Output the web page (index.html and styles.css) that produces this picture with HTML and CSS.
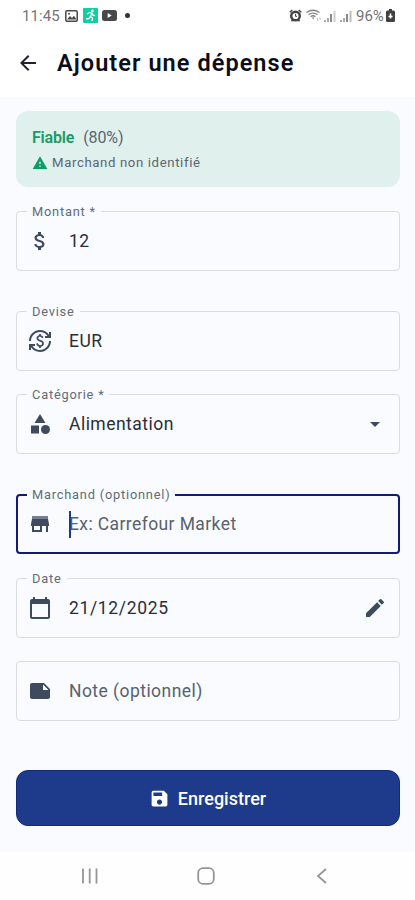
FILE: index.html
```html
<!DOCTYPE html>
<html lang="fr">
<head>
<meta charset="utf-8">
<meta name="viewport" content="width=device-width, initial-scale=1">
<title>Ajouter une dépense</title>
<link rel="stylesheet" href="styles.css">
</head>
<body>
<div class="statusbar">
  <span class="clock">11:45</span>
  <svg class="st-img" width="13" height="12" viewBox="0 0 13 12"><rect x=".8" y=".8" width="11.4" height="10.4" rx="1.2" fill="none" stroke="#484848" stroke-width="1.5"/><path d="M2 9.500 5 6l2 2 2-2.300 2.500 3.800z" fill="#484848"/><circle cx="4" cy="3.800" r="1" fill="#484848"/></svg>
  <svg class="st-run" width="15" height="15" viewBox="0 0 15 15"><rect width="15" height="15" rx="1" fill="#12cda0"/><circle cx="9.300" cy="3" r="1.400" fill="#fff"/><path d="M4 6l3-1.500 2 .8-1.500 3.200 2 1.500-.5 3M7.300 8.500 6 10.500 3.200 11M9 5.500l1 1.700 2 .3" fill="none" stroke="#fff" stroke-width="1.300"/></svg>
  <svg class="st-tube" width="15" height="11" viewBox="0 0 15 11"><rect width="15" height="11" rx="2.500" fill="#484848"/><path d="M5.700 3v5l4-2.500z" fill="#fff"/></svg>
  <span class="dot"></span>
  <span class="spacer"></span>
  <svg class="st-alarm" width="13" height="13" viewBox="0 0 13 13" fill="none" stroke="#444"><circle cx="6.500" cy="7" r="4.300" stroke-width="2.400"/><path d="M.8 3.300 3.300 1M12.200 3.300 9.700 1M2.500 12.300l1.300-1.500M10.500 12.300 9.200 10.800" stroke-width="1.500"/><path d="M6.500 4.800v2.500H8" stroke-width="1"/></svg>
  <svg class="st-wifi" width="16" height="13" viewBox="0 0 16 13" fill="none" stroke="#858585" stroke-width="1.300"><path d="M.5 3.500q6.500-4.500 13 0M2.500 5.600q4.500-3 9 0M4.600 7.600q2.400-1.700 4.800 0"/><path d="M5.800 8.500h2.600l-1.300 2z" fill="#858585" stroke="none"/><path d="M11.500 9v3M14 8.500v2" stroke="#c4c4c4"/></svg>
  <svg class="st-sig" width="12" height="12" viewBox="0 0 12 12"><path d="M0 10h2v2H0zM3 8h2v4H3z" fill="#aaa"/><path d="M6 4h2v8H6z" fill="#8a8a8a"/><path d="M9.500 1h2v11h-2z" fill="#ccc"/></svg>
  <svg class="st-sig2" width="12" height="12" viewBox="0 0 12 12"><path d="M0 10h2v2H0zM3 8h2v4H3z" fill="#aaa"/><path d="M6 4h2v8H6z" fill="#8a8a8a"/><path d="M9.500 1h2v11h-2z" fill="#bbb"/></svg>
  <span class="pct">96%</span>
  <svg class="st-bat" width="9" height="13" viewBox="0 0 9 13"><path d="M3 0h3v1.500h1.500Q9 1.500 9 3v8.500Q9 13 7.500 13h-6Q0 13 0 11.500V3q0-1.500 1.500-1.500H3z" fill="#404040"/><path d="M4.500 4.500v5M2.500 7.500h4" stroke="#fff" stroke-width="1.600"/></svg>
</div>
<header class="appbar">
  <svg class="back" width="24" height="24" viewBox="0 0 24 24"><path d="M20 11H7.830l5.590-5.590L12 4l-8 8 8 8 1.410-1.410L7.830 13H20z"/></svg>
  <h1>Ajouter une dépense</h1>
</header>
<main>
  <section class="notice">
    <div class="rating"><b>Fiable</b><span>(80%)</span></div>
    <div class="warn"><svg width="16" height="16" viewBox="0 0 24 24"><path d="M1 21h22L12 2zm12-3h-2v-2h2zm0-4h-2v-4h2z"/></svg><span>Marchand non identifié</span></div>
  </section>

  <div class="field amount">
    <label>Montant *</label>
    <svg class="icon" viewBox="0 0 24 24"><path d="M11.800 10.900c-2.270-.59-3-1.200-3-2.150 0-1.090 1.010-1.850 2.700-1.850 1.780 0 2.440.85 2.500 2.100h2.210c-.07-1.720-1.120-3.300-3.210-3.810V3h-3v2.160c-1.940.42-3.500 1.680-3.500 3.610 0 2.310 1.910 3.460 4.700 4.130 2.500.6 3 1.480 3 2.410 0 .69-.49 1.790-2.700 1.790-2.060 0-2.870-.92-2.980-2.100h-2.200c.12 2.190 1.760 3.420 3.680 3.830V21h3v-2.150c1.950-.37 3.500-1.500 3.500-3.550 0-2.840-2.430-3.810-4.700-4.400z"/></svg>
    <span class="value">12</span>
  </div>
  <div class="field currency">
    <label>Devise</label>
    <svg class="icon" viewBox="0 0 24 24"><path d="M12.890 11.100c-1.780-.59-2.640-.96-2.640-1.900 0-1.020 1.110-1.390 1.810-1.390 1.310 0 1.790.99 1.900 1.340l1.580-.67c-.15-.44-.82-1.910-2.660-2.230V5h-1.750v1.260c-2.600.56-2.620 2.850-2.620 2.960 0 2.270 2.250 2.910 3.350 3.310 1.580.56 2.280 1.070 2.280 2.030 0 1.130-1.050 1.610-1.980 1.610-1.820 0-2.340-1.870-2.400-2.090l-1.660.67c.63 2.190 2.280 2.780 3.020 2.960V19h1.750v-1.240c.52-.09 3.020-.59 3.020-3.220.01-1.390-.6-2.610-3-3.440zM3 21H1v-6h6v2H4.520c1.610 2.410 4.360 4 7.480 4 4.970 0 9-4.030 9-9h2c0 6.080-4.920 11-11 11-3.720 0-7.010-1.850-9-4.670zM1 12C1 5.920 5.920 1 12 1c3.720 0 7.010 1.850 9 4.670V3h2v6h-6V7h2.480C17.870 4.590 15.120 3 12 3c-4.970 0-9 4.030-9 9z"/></svg>
    <span class="value">EUR</span>
  </div>
  <div class="field category">
    <label>Catégorie *</label>
    <svg class="icon" viewBox="0 0 24 24"><path d="m12 2-5.500 9h11z"/><circle cx="17.500" cy="17.500" r="4.500"/><path d="M3 13.500h8v8H3z"/></svg>
    <span class="value">Alimentation</span>
    <svg class="icon end" viewBox="0 0 24 24"><path d="m7 10 5 5 5-5z"/></svg>
  </div>
  <div class="field merchant focused">
    <label>Marchand (optionnel)</label>
    <svg class="icon" viewBox="0 0 24 24"><path opacity=".7" d="M4 4h16v3H4z"/><path d="M21 14v-2l-1-5H4l-1 5v2h1v6h10v-6h4v6h2v-6zm-9 4H6v-4h6z"/></svg>
    <span class="value hint">Ex: Carrefour Market</span>
  </div>
  <div class="field date">
    <label>Date</label>
    <svg class="icon" viewBox="0 0 24 24"><path d="M20 3h-1V1h-2v2H7V1H5v2H4c-1.100 0-2 .9-2 2v16c0 1.100.9 2 2 2h16c1.100 0 2-.9 2-2V5c0-1.100-.9-2-2-2zm0 18H4V8h16z"/></svg>
    <span class="value digits">21/12/2025</span>
    <svg class="icon end" viewBox="0 0 24 24"><path d="M3 17.250V21h3.750L17.810 9.940l-3.750-3.750zM20.710 7.040a1 1 0 0 0 0-1.410l-2.340-2.340a1 1 0 0 0-1.410 0l-1.830 1.830 3.750 3.750z"/></svg>
  </div>
  <div class="field note">
    <svg class="icon" viewBox="0 0 24 24"><path d="M22 10l-6-6H4c-1.100 0-2 .9-2 2v12.010c0 1.100.9 1.990 2 1.990h16c1.100 0 2-.9 2-2zm-7-4.500 5.500 5.500H15z"/></svg>
    <span class="value hint">Note (optionnel)</span>
  </div>
  <button class="save" type="button">
    <svg width="21" height="21" viewBox="0 0 24 24"><path d="M17 3H5a2 2 0 0 0-2 2v14c0 1.100.89 2 2 2h14c1.100 0 2-.9 2-2V7zm-5 16c-1.660 0-3-1.340-3-3s1.340-3 3-3 3 1.340 3 3-1.340 3-3 3zm3-10H5V5h10z"/></svg>
    <span>Enregistrer</span>
  </button>
</main>
<nav class="navbar">
  <svg width="18" height="18" viewBox="0 0 18 18"><path d="M2 1.500v15M8.700 1.500v15M15.500 1.500v15"/></svg>
  <svg width="18" height="18" viewBox="0 0 18 18"><rect x="1.200" y="1.200" width="15.600" height="15.600" rx="4.800"/></svg>
  <svg width="18" height="18" viewBox="0 0 18 18"><path d="M13 2 5 9l8 7"/></svg>
</nav>
</body>
</html>
```

FILE: styles.css
```css
* { box-sizing: border-box; }
body {
  margin: 0;
  width: 415px;
  height: 900px;
  overflow: hidden;
  display: flex;
  flex-direction: column;
  background: #fff;
  color: #2a2e37;
  font-family: Roboto, "Liberation Sans", sans-serif;
}
svg { display: block; flex: none; }

.statusbar {
  height: 31px;
  padding: 0 20px 0 22px;
  display: flex;
  align-items: center;
  color: #747474;
  font-size: 15px;
}
.clock { width: 43px; letter-spacing: .1px; }
.st-run { margin-left: 5px; }
.st-tube { margin-left: 4px; }
.dot { width: 5px; height: 5px; margin-left: 8px; border-radius: 50%; background: #333; }
.spacer { flex: 1; }
.st-alarm { margin-right: 4px; }
.st-sig { margin-left: 2px; }
.st-sig2 { margin-left: 4px; }
.pct { width: 30px; margin-left: 4px; }

.appbar {
  height: 66px;
  padding: 0 16px 2px;
  display: flex;
  align-items: center;
}
.back { fill: #20232c; width: 24px; height: 24px; }
h1 {
  margin: 0 0 0 17px;
  color: #0b0e1a;
  font-size: 23.500px;
  font-weight: 600;
  letter-spacing: 1.060px;
  white-space: nowrap;
}

main {
  height: 755px;
  padding: 14px 15px 0 16px;
  display: flex;
  flex-direction: column;
  background: #f9fbfe;
}
.notice {
  flex: none;
  height: 76px;
  padding: 17px 16px;
  border-radius: 12px;
  background: #e0f0ec;
  color: #5b6672;
}
.rating { display: flex; gap: 9px; font-size: 16px; line-height: 20px; }
.rating b { color: #169b6b; font-weight: 600; letter-spacing: -.2px; }
.rating span { letter-spacing: -.1px; }
.warn { display: flex; align-items: center; gap: 4px; margin-top: 6px; font-size: 13.200px; line-height: 17px; letter-spacing: .62px; }
.warn svg { fill: #0d9b67; }

.field {
  position: relative;
  flex: none;
  height: 60px;
  padding: 0 12px 0 11px;
  display: flex;
  align-items: center;
  gap: 18px;
  border: 1px solid #d9dde1;
  border-radius: 4px;
}
.field label {
  position: absolute;
  top: -9px;
  left: 10px;
  padding: 0 5px;
  background: #f9fbfe;
  color: #626b77;
  font-size: 12.800px;
  line-height: 17px;
  letter-spacing: .8px;
  white-space: nowrap;
}
.icon { width: 24px; height: 24px; margin-right: -1px; fill: #3e4b5e; }
.end { margin: 0 0 0 auto; }
.value { font-size: 17.500px; letter-spacing: .48px; white-space: nowrap; }
.digits { letter-spacing: .66px; }
.hint { color: #58616e; letter-spacing: .45px; }
.merchant .hint { letter-spacing: .4px; }
.amount { margin-top: 24px; }
.currency { margin-top: 40px; }
.category { margin-top: 23px; }
.merchant { margin-top: 40px; }
.date { margin-top: 24px; }
.note { margin-top: 23px; }
.focused { border: 2px solid #121a76; padding: 0 11px 0 10px; }
.focused label { top: -10px; left: 9px; }
.focused .hint::before {
  content: "";
  position: absolute;
  left: 51px;
  top: 15px;
  width: 2px;
  height: 27px;
  background: #1e3a8a;
}
.save {
  flex: none;
  height: 56px;
  margin-top: 49px;
  padding: 0 1px 0 0;
  display: flex;
  align-items: center;
  justify-content: center;
  gap: 8px;
  border: 1px solid #122b7f;
  border-radius: 12px;
  background: #1e3a8a;
  color: #fff;
  font: 500 18px Roboto, sans-serif;
}
.save svg { fill: #fff; }
.navbar {
  height: 48px;
  padding: 0 84px 0 81px;
  display: flex;
  align-items: center;
  justify-content: space-between;
  background: #fefefe;
}
.navbar svg { fill: none; stroke: #969696; stroke-width: 1.800; }
```
